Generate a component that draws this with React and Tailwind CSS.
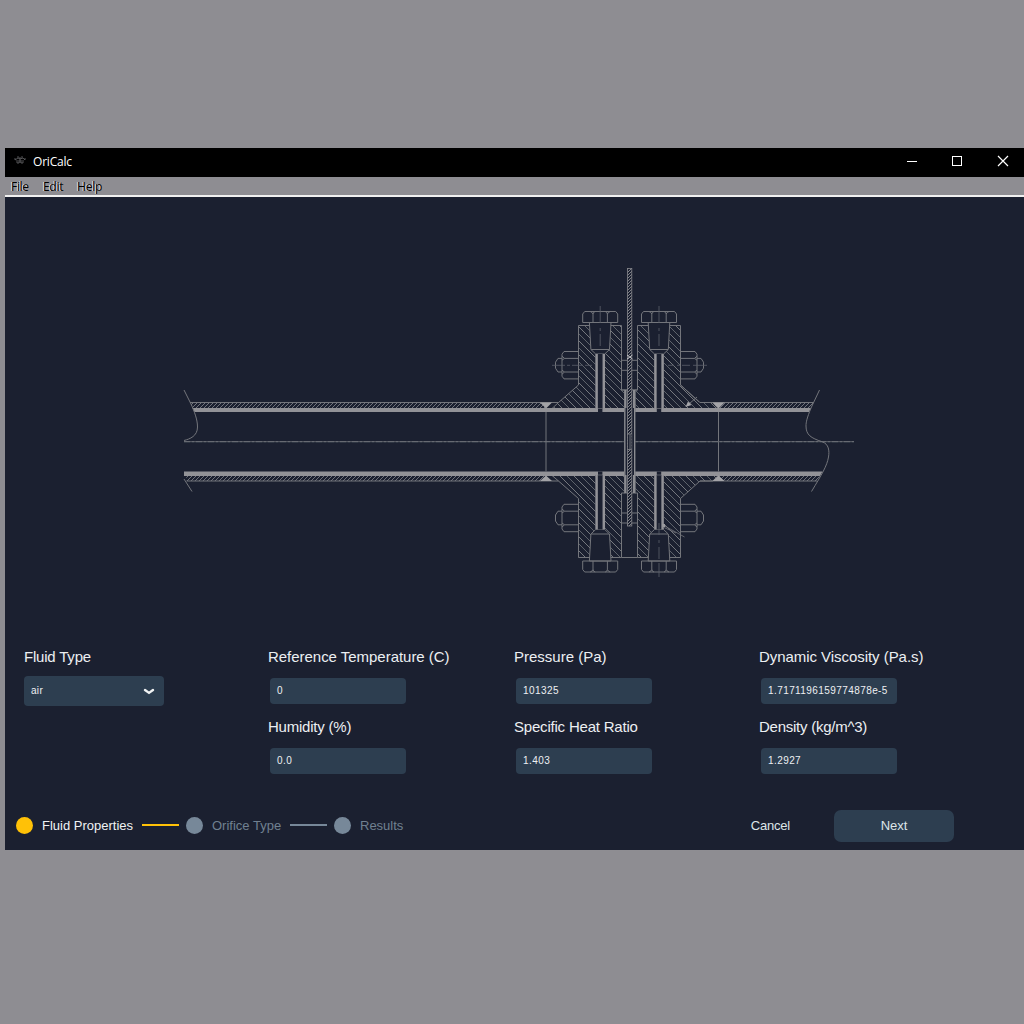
import React from "react";

function Bolt({ x, flip }) {
  return (
    <g transform={flip ? `translate(${x} 883.5) scale(1 -1)` : `translate(${x} 0)`}>
      <path d="M-10.8 322.5 L-9.3 349.5 L-4.5 354 H4.5 L9.3 349.5 L10.8 322.5Z" fill="#1b2030" />
      <path d="M-9 349.5H9" />
      <path d="M-17.5 314 L-15.5 311.5 H15.5 L17.5 314 V322.5 H-17.5Z M-7.2 322.5V314Q-7 312-5 311.5 M7.2 322.5V314Q7 312 5 311.5 M-7.2 314Q-8 312-10 311.5 M7.2 314Q8 312 10 311.5" />
      <rect x="-4.7" y="354" width="9.4" height="54.5" fill="#1b2030" stroke="none" />
      <rect x="-2.2" y="408" width="4.4" height="4" fill="#1b2030" stroke="none" />
      <path d="M-3.6 354V409 M3.6 354V409" stroke="#929297" strokeWidth="2.5" />
      <path d="M-2.3 408.5H2.3" strokeWidth="0.7" />
    </g>
  );
}

function Nut({ x, y, flip }) {
  return (
    <g transform={`translate(${x} ${y}) scale(${flip ? -1 : 1} 1)`}>
      <path d="M0-13.7H-14.5L-16.5-11V11L-14.5 13.7H0Z M0-6.8H-14L-16.5-5 M0 6.8H-14L-16.5 5 M-14-6.8L-16.5-9 M-14 6.8L-16.5 9 M-16.5-6.8H-20.5L-23-3V3L-20.5 6.8H-16.5" />
    </g>
  );
}

function FlangeDrawing() {
  return (
    <svg
      className="ml-[165px] mt-[58px] block h-[335px] w-[700px] shrink-0"
      viewBox="170 255 700 335"
      fill="none"
      stroke="#73757b"
      strokeWidth="1"
    >
      <defs>
        <pattern id="flange-hatch" width="14" height="14" patternUnits="userSpaceOnUse">
          <path d="M-1-1L15 15M-1 13L1 15M13-1L15 1" stroke="#7a7c83" strokeWidth="0.95" />
          <path d="M-1 6L8 15M6-1L15 8" stroke="#62666f" strokeWidth="0.95" />
        </pattern>
        <pattern id="wall-hatch" width="4" height="4" patternUnits="userSpaceOnUse">
          <path d="M-1 5L5-1M-1 1L1-1M3 5L5 3" stroke="#7b7d84" strokeWidth="0.9" />
        </pattern>
        <pattern id="plate-hatch" width="3" height="3" patternUnits="userSpaceOnUse">
          <path d="M-1 4L4-1M-1 1L1-1M2 4L4 2" stroke="#8c8d92" strokeWidth="0.9" />
        </pattern>
      </defs>

      <path d="M190 402.5H546V408.5H193Z M718 402.5H813.5L811 408.5H718Z M186 475.5H546V481H187Z M718 475.5H820L817 481H718Z" fill="url(#wall-hatch)" stroke="none" />
      <path d="M190 402.5H558.5 M700 402.5H813.5 M186.5 481H558.5 M700 481H817" />

      <path d="M552 408.5L558.5 402.5L578.5 385V325.5H621.5V390H624.5V408.5Z M635 408.5V390H637.5V325.5H680.5V385L700 402.5H713L718 408.5Z" fill="url(#flange-hatch)" />
      <path d="M552 475.5L558.5 481L578.5 498.5V557.5H621.5V493H624.5V475.5Z M635 475.5V493H637.5V557.5H680.5V498.5L700 481H713L718 475.5Z" fill="url(#flange-hatch)" />
      <path d="M621.5 390H637.5 M621.5 557.5H637.5" />

      <path d="M192.5 408H624.5V412H194.5Z M635 408H811L809 412H635Z M184 471.5H624.5V476H184Z M635 471.5H822.5L820 476H635Z" fill="#929297" stroke="none" />
      <path d="M540 402.5H552L546 408.5Z M712.5 402.5H724.5L718.5 408.5Z M540 481H552L546 475.5Z M712.5 481H724.5L718.5 475.5Z" fill="#a3a3a7" stroke="none" />
      <path d="M546 412V471.5 M718.5 412V471.5" />
      <path d="M184 441.7H854" stroke="#62656d" />
      <path d="M184 441.7H854" strokeDasharray="6 2 2 2" stroke="#77797f" strokeWidth="0.7" />

      <path d="M184 390L191 404C194 411 197.500 419 197.500 427C197.500 436 190 439 184 440.500" />
      <path d="M184 479L192 491.500" />
      <path d="M819.500 390L811 408C807 418 806 422 806 426C806 435 811 438 822 441.700C829 444 829.500 451 828.500 457C827 466 822 474 811.500 491.500" />

      <Bolt x={600.2} />
      <Bolt x={659} />
      <Bolt x={600.2} flip />
      <Bolt x={659} flip />

      <Nut x={578.5} y={365.2} />
      <Nut x={680.5} y={365.2} flip />
      <Nut x={578.5} y={518} />
      <Nut x={680.5} y={518} flip />

      <path d="M552 365.3H565M567 365.3H570M572 365.3H583M585 365.3H592M668 365.3H674M677 365.3H680M682 365.3H690M693 365.3H707" stroke="#5c606a" strokeWidth="0.8" />
      <path d="M600.2 306V323M600.2 328V331M600.2 334V346M659 306V323M659 328V331M659 334V346M659 523V535M659 540V543M659 547V559M659 563V577" stroke="#5c606a" strokeWidth="0.8" />

      <path d="M621.500 360.300H627.500M621.500 370.300H627.500M632 360.300H637.500M632 370.300H637.500M621.500 513H627.500M621.500 523H627.500M632 513H637.500M632 523H637.500" />
      <rect x="624.500" y="390" width="10.500" height="103" fill="#1b2030" />
      <path d="M625.500 390V408M634 390V408M625.500 475V493M634 475V493" stroke="#8b8c91" strokeWidth="2" />
      <path d="M625 408V475M634.500 408V475" stroke="#8b8c91" />
      <rect x="627.500" y="268.500" width="4.300" height="257.500" fill="#1b2030" stroke="none" />
      <rect x="627.500" y="268.500" width="4.300" height="257.500" fill="url(#plate-hatch)" stroke="#85868b" strokeWidth="0.8" />
      <rect x="628" y="434" width="3.400" height="15" fill="#1b2030" stroke="none" />
      <path d="M628 434H631.500M628 449.500H631.500M630 434V449" />
      <path d="M627 355L632.500 359M627 359L632.500 355" stroke="#bebec1" />

      <path d="M680.500 385L699 402M697 397L689 404" />
      <path d="M685.500 407L688 401.500L691.500 405Z" fill="#a6a6aa" stroke="none" />
      <path d="M663 525L684.500 537M663 527L676 533" strokeWidth="0.8" />
      <path d="M662 524H665V527H663Z" fill="#9a9a9e" stroke="none" />
    </svg>
  );
}

function Field({ label, value, tracking = "" }) {
  return (
    <div className="h-[70px]">
      <div className={`h-[30px] whitespace-nowrap text-[15px] leading-[18px] text-[#eceff2] ${tracking}`}>{label}</div>
      <div className="ml-[2px] flex h-[26px] w-[136px] items-center rounded-[4px] bg-[#2d3e50] pb-[2px] pl-[7px] text-[10px] tracking-[0.42px] text-[#edf0f2]">
        {value}
      </div>
    </div>
  );
}

function Step({ label, active, width }) {
  return (
    <div className="flex items-center">
      <span className={`mt-[-1px] size-[17px] rounded-full ${active ? "bg-[#ffc107]" : "bg-[#778899]"}`} />
      <span className={`ml-[9px] whitespace-nowrap ${width} ${active ? "text-[#f0f2f4]" : "text-[#708090]"}`}>{label}</span>
    </div>
  );
}

export default function App() {
  return (
    <div className="h-[1024px] w-[1024px] overflow-hidden bg-[#8e8d92] pl-[5px] pt-[148px] font-['Liberation_Sans',Arial,sans-serif]">
      <div className="flex h-[702px] flex-col bg-[#1b2030]">
        <div className="flex h-[29px] shrink-0 items-center bg-black text-white">
          <svg className="ml-[9px] mt-[-5px] h-[8px] w-[12px]" viewBox="0 0 12 8" fill="none" stroke="#68686b" strokeWidth="0.8">
            <path d="M0 3H2M3 1H5M7 1H9M10 3H12M1 4L4 2L6 3L9 2L11 4M3 4V7H5V4M7 4V7H9V4M6 1V7" />
          </svg>
          <span className="ml-[7px] mt-[-1px] font-['Open_Sans',sans-serif] text-[12px] leading-[16px] tracking-[-0.2px]">OriCalc</span>
          <svg className="ml-auto mt-[-3px] h-[12px] w-[118px]" viewBox="0 0 118 12" fill="none" stroke="white" shapeRendering="crispEdges">
            <path d="M1 6.500H11M46.500 1.500H55.500V10.500H46.500Z" />
            <path d="M92 1L102 11M102 1L92 11" shapeRendering="auto" strokeWidth="1.200" />
          </svg>
        </div>
        <div className="flex h-[20px] shrink-0 border-b-2 border-[#f0f0f0] bg-[#8e8d92] pl-[6px] font-['Open_Sans',sans-serif] text-[12px] leading-[20px] text-black">
          <span className="w-[32px] tracking-[-0.3px] [text-shadow:-1px_0_0_#e6e6ef]">File</span>
          <span className="w-[34px] tracking-[-0.3px] [text-shadow:-1px_0_0_#e6e6ef]">Edit</span>
          <span className="tracking-[-0.2px] [text-shadow:-1px_0_0_#e6e6ef]">Help</span>
        </div>

        <FlangeDrawing />

        <div className="mt-[58px] flex h-[140px] shrink-0 pl-[19px]">
          <div className="w-[244px]">
            <div className="h-[28px] text-[15px] leading-[18px] tracking-[-0.2px] text-[#eceff2]">Fluid Type</div>
            <div className="flex h-[30px] w-[140px] items-center justify-between rounded-[4px] bg-[#2d3e50] pl-[7px] pr-[9px] text-[10px] tracking-[0.3px] text-[#edf0f2]">
              <span className="mt-[-2px]">air</span>
              <svg className="h-[7px] w-[12px]" viewBox="0 0 12 7" fill="none" stroke="#f0f2f3" strokeWidth="2.400" strokeLinecap="round" strokeLinejoin="round">
                <path d="M2 2L6 4.900L10 2" />
              </svg>
            </div>
          </div>
          <div className="w-[246px]">
            <Field label="Reference Temperature (C)" value="0" tracking="tracking-[-0.03px]" />
            <Field label="Humidity (%)" value="0.0" tracking="tracking-[-0.22px]" />
          </div>
          <div className="w-[245px]">
            <Field label="Pressure (Pa)" value="101325" />
            <Field label="Specific Heat Ratio" value="1.403" tracking="tracking-[-0.2px]" />
          </div>
          <div>
            <Field label="Dynamic Viscosity (Pa.s)" value="1.7171196159774878e-5" tracking="tracking-[-0.05px]" />
            <Field label="Density (kg/m^3)" value="1.2927" tracking="tracking-[-0.25px]" />
          </div>
        </div>

        <div className="mt-[22px] flex h-[32px] shrink-0 items-center pl-[11px] pr-[70px] text-[13px]">
          <Step label="Fluid Properties" active width="w-[100px]" />
          <span className="mr-[7px] mt-[-2px] h-[2px] w-[37px] bg-[#ffc107]" />
          <Step label="Orifice Type" width="w-[78px]" />
          <span className="mr-[7px] mt-[-2px] h-[2px] w-[37px] bg-[#778899]" />
          <Step label="Results" width="w-[50px]" />
          <button className="ml-auto mr-[44px] tracking-[-0.2px] text-[#dde5e8]">Cancel</button>
          <button className="h-[32px] w-[120px] rounded-[7px] bg-[#2d3e50] text-[#dde5e8]">Next</button>
        </div>
      </div>
    </div>
  );
}
